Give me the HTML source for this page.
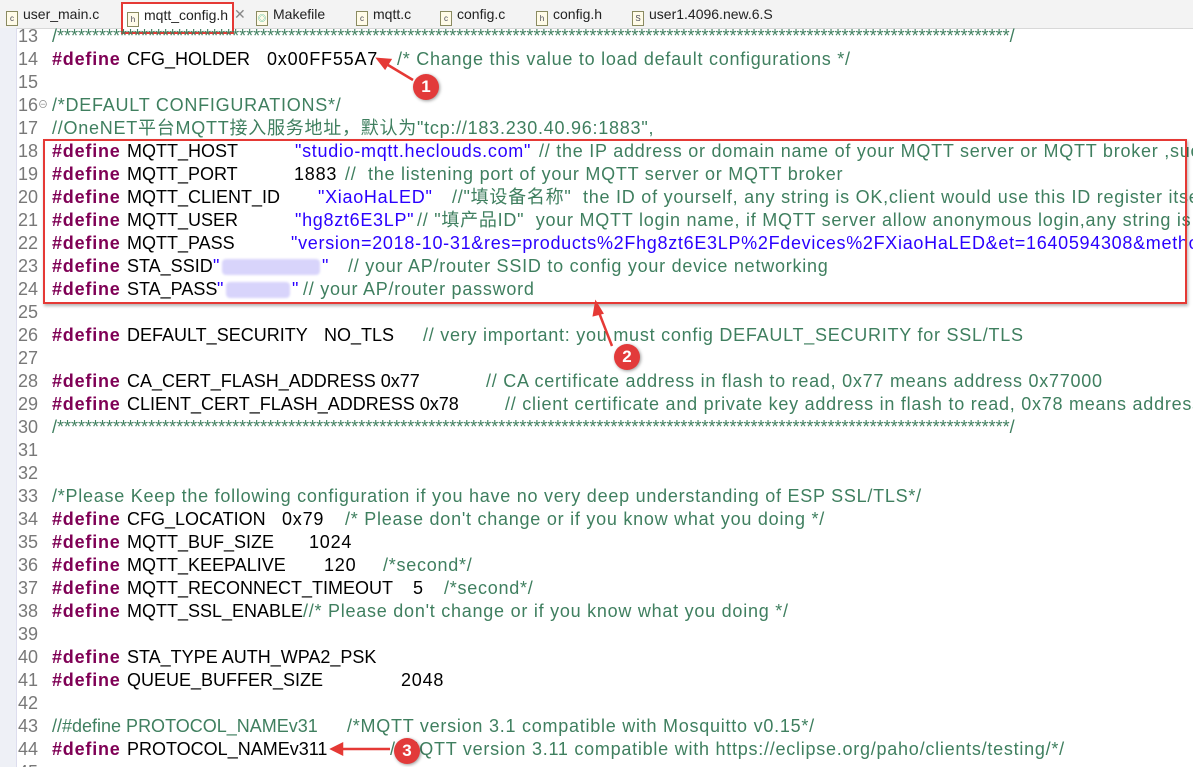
<!DOCTYPE html>
<html><head><meta charset="utf-8"><style>
body{margin:0;width:1193px;height:767px;overflow:hidden;background:#fff;font-family:"Liberation Sans","Noto Sans CJK SC",sans-serif;position:relative}
#tabs{position:absolute;left:0;top:0;width:1193px;height:28px;background:#f3f3f3;border-bottom:1px solid #d8d8d8}
.tab{position:absolute;top:6px;font-size:14px;color:#222;white-space:pre}
.ic{display:inline-block;width:10px;height:13px;border:1px solid #8a8a60;background:#fffbe8;font-size:8px;line-height:13px;text-align:center;margin-right:5px;vertical-align:-2px;color:#445}
#gut{position:absolute;left:0;top:28px;width:16px;height:739px;background:#eef0f6;border-right:1px solid #dde}
.l{position:absolute;left:0;height:23px;line-height:23px;font-size:18px;white-space:pre;width:1193px}
.l span{position:absolute;top:0}
.n{color:#787878}
.k{color:#7f0055;font-weight:bold;letter-spacing:0.8px}
.c{color:#3f7f5f;letter-spacing:0.75px}
.s{color:#2a00ff;letter-spacing:0.7px}
.d{color:#000}
.g{color:#000;letter-spacing:0.8px}
.blur{position:absolute;top:4px;height:16px;background:#d8d4fb;border-radius:4px;filter:blur(1px)}
.badge{position:absolute;width:26px;height:26px;border-radius:50%;background:#e23a3a;color:#fff;font-size:17px;font-weight:bold;text-align:center;line-height:26px;box-shadow:1px 1px 3px rgba(0,0,0,.4)}
</style></head><body>
<div id="tabs">
<span class="tab" style="left:6px"><span class="ic">c</span>user_main.c</span>
<span class="tab" style="left:234px;color:#888">✕</span>
<span class="tab" style="left:256px"><span class="ic" style="color:#2a8">◎</span>Makefile</span>
<span class="tab" style="left:356px"><span class="ic">c</span>mqtt.c</span>
<span class="tab" style="left:440px"><span class="ic">c</span>config.c</span>
<span class="tab" style="left:536px"><span class="ic">h</span>config.h</span>
<span class="tab" style="left:632px"><span class="ic">S</span>user1.4096.new.6.S</span>
</div>
<div style="position:absolute;left:121px;top:2px;width:109px;height:28px;border:2px solid #e53935;background:#fff"></div>
<span class="tab" style="left:127px;top:7px;position:absolute;font-size:14px"><span class="ic">h</span>mqtt_config.h</span>
<div id="gut"></div>
<div style="position:absolute;left:0;top:28px;width:1193px;height:739px;overflow:hidden">
<div style="position:absolute;left:0;top:-28px;width:1193px;height:767px">
<div class="l" style="top:25px"><span class="n" style="left:18px">13</span><span class="c" style="left:52px;letter-spacing:0">/****************************************************************************************************************************************/</span></div>
<div class="l" style="top:48px"><span class="n" style="left:18px">14</span><span class="k" style="left:52px">#define</span><span class="d" style="left:127px">CFG_HOLDER</span><span class="g" style="left:267px">0x00FF55A7</span><span class="c" style="left:397px">/* Change this value to load default configurations */</span></div>
<div class="l" style="top:71px"><span class="n" style="left:18px">15</span></div>
<div class="l" style="top:94px"><span class="n" style="left:18px">16</span><span style="left:38px;font-size:10px;color:#888">⊖</span><span class="c" style="left:52px">/*DEFAULT CONFIGURATIONS*/</span></div>
<div class="l" style="top:117px"><span class="n" style="left:18px">17</span><span class="c" style="left:52px">//OneNET平台MQTT接入服务地址，默认为"tcp://183.230.40.96:1883",</span></div>
<div class="l" style="top:140px"><span class="n" style="left:18px">18</span><span class="k" style="left:52px">#define</span><span class="d" style="left:127px">MQTT_HOST</span><span class="s" style="left:295px">"studio-mqtt.heclouds.com"</span><span class="c" style="left:539px">// the IP address or domain name of your MQTT server or MQTT broker ,such as</span></div>
<div class="l" style="top:163px"><span class="n" style="left:18px">19</span><span class="k" style="left:52px">#define</span><span class="d" style="left:127px">MQTT_PORT</span><span class="g" style="left:294px">1883</span><span class="c" style="left:345px">//  the listening port of your MQTT server or MQTT broker</span></div>
<div class="l" style="top:186px"><span class="n" style="left:18px">20</span><span class="k" style="left:52px">#define</span><span class="d" style="left:127px">MQTT_CLIENT_ID</span><span class="s" style="left:318px">"XiaoHaLED"</span><span class="c" style="left:452px">//"填设备名称"  the ID of yourself, any string is OK,client would use this ID register itself</span></div>
<div class="l" style="top:209px"><span class="n" style="left:18px">21</span><span class="k" style="left:52px">#define</span><span class="d" style="left:127px">MQTT_USER</span><span class="s" style="left:295px">"hg8zt6E3LP"</span><span class="c" style="left:417px">// "填产品ID"  your MQTT login name, if MQTT server allow anonymous login,any string is OK</span></div>
<div class="l" style="top:232px"><span class="n" style="left:18px">22</span><span class="k" style="left:52px">#define</span><span class="d" style="left:127px">MQTT_PASS</span><span class="s" style="left:291px">"version=2018-10-31&amp;res=products%2Fhg8zt6E3LP%2Fdevices%2FXiaoHaLED&amp;et=1640594308&amp;method=md5</span></div>
<div class="l" style="top:255px"><span class="n" style="left:18px">23</span><span class="k" style="left:52px">#define</span><span class="d" style="left:127px">STA_SSID</span><span class="s" style="left:213px">"</span><div class="blur" style="left:222px;width:98px"></div><span class="s" style="left:322px">"</span><span class="c" style="left:348px">// your AP/router SSID to config your device networking</span></div>
<div class="l" style="top:278px"><span class="n" style="left:18px">24</span><span class="k" style="left:52px">#define</span><span class="d" style="left:127px">STA_PASS</span><span class="s" style="left:217px">"</span><div class="blur" style="left:226px;width:64px"></div><span class="s" style="left:292px">"</span><span class="c" style="left:303px">// your AP/router password</span></div>
<div class="l" style="top:301px"><span class="n" style="left:18px">25</span></div>
<div class="l" style="top:324px"><span class="n" style="left:18px">26</span><span class="k" style="left:52px">#define</span><span class="d" style="left:127px">DEFAULT_SECURITY</span><span class="d" style="left:324px">NO_TLS</span><span class="c" style="left:423px">// very important: you must config DEFAULT_SECURITY for SSL/TLS</span></div>
<div class="l" style="top:347px"><span class="n" style="left:18px">27</span></div>
<div class="l" style="top:370px"><span class="n" style="left:18px">28</span><span class="k" style="left:52px">#define</span><span class="d" style="left:127px">CA_CERT_FLASH_ADDRESS 0x77</span><span class="c" style="left:486px">// CA certificate address in flash to read, 0x77 means address 0x77000</span></div>
<div class="l" style="top:393px"><span class="n" style="left:18px">29</span><span class="k" style="left:52px">#define</span><span class="d" style="left:127px">CLIENT_CERT_FLASH_ADDRESS 0x78</span><span class="c" style="left:505px">// client certificate and private key address in flash to read, 0x78 means address 0x78000</span></div>
<div class="l" style="top:416px"><span class="n" style="left:18px">30</span><span class="c" style="left:52px;letter-spacing:0">/****************************************************************************************************************************************/</span></div>
<div class="l" style="top:439px"><span class="n" style="left:18px">31</span></div>
<div class="l" style="top:462px"><span class="n" style="left:18px">32</span></div>
<div class="l" style="top:485px"><span class="n" style="left:18px">33</span><span class="c" style="left:52px">/*Please Keep the following configuration if you have no very deep understanding of ESP SSL/TLS*/</span></div>
<div class="l" style="top:508px"><span class="n" style="left:18px">34</span><span class="k" style="left:52px">#define</span><span class="d" style="left:127px">CFG_LOCATION</span><span class="g" style="left:282px">0x79</span><span class="c" style="left:345px">/* Please don't change or if you know what you doing */</span></div>
<div class="l" style="top:531px"><span class="n" style="left:18px">35</span><span class="k" style="left:52px">#define</span><span class="d" style="left:127px">MQTT_BUF_SIZE</span><span class="g" style="left:309px">1024</span></div>
<div class="l" style="top:554px"><span class="n" style="left:18px">36</span><span class="k" style="left:52px">#define</span><span class="d" style="left:127px">MQTT_KEEPALIVE</span><span class="g" style="left:324px">120</span><span class="c" style="left:383px">/*second*/</span></div>
<div class="l" style="top:577px"><span class="n" style="left:18px">37</span><span class="k" style="left:52px">#define</span><span class="d" style="left:127px">MQTT_RECONNECT_TIMEOUT</span><span class="d" style="left:413px">5</span><span class="c" style="left:444px">/*second*/</span></div>
<div class="l" style="top:600px"><span class="n" style="left:18px">38</span><span class="k" style="left:52px">#define</span><span class="d" style="left:127px">MQTT_SSL_ENABLE</span><span class="c" style="left:303px">//* Please don't change or if you know what you doing */</span></div>
<div class="l" style="top:623px"><span class="n" style="left:18px">39</span></div>
<div class="l" style="top:646px"><span class="n" style="left:18px">40</span><span class="k" style="left:52px">#define</span><span class="d" style="left:127px">STA_TYPE AUTH_WPA2_PSK</span></div>
<div class="l" style="top:669px"><span class="n" style="left:18px">41</span><span class="k" style="left:52px">#define</span><span class="d" style="left:127px">QUEUE_BUFFER_SIZE</span><span class="g" style="left:401px">2048</span></div>
<div class="l" style="top:692px"><span class="n" style="left:18px">42</span></div>
<div class="l" style="top:715px"><span class="n" style="left:18px">43</span><span class="c" style="left:52px;letter-spacing:0">//#define PROTOCOL_NAMEv31</span><span class="c" style="left:347px">/*MQTT version 3.1 compatible with Mosquitto v0.15*/</span></div>
<div class="l" style="top:738px"><span class="n" style="left:18px">44</span><span class="k" style="left:52px">#define</span><span class="d" style="left:127px">PROTOCOL_NAMEv311</span><span class="c" style="left:390px">/*MQTT version 3.11 compatible with https://eclipse.org/paho/clients/testing/*/</span></div>
<div class="l" style="top:761px"><span class="n" style="left:18px">45</span></div>
</div></div>
<div style="position:absolute;left:43px;top:139px;width:1140px;height:161px;border:2px solid #e53935;box-shadow:1px 2px 3px rgba(0,0,0,.3)"></div>
<svg style="position:absolute;left:0;top:0" width="1193" height="767">
<g stroke="#e53935" stroke-width="2.5" fill="#e53935">
<line x1="413" y1="80" x2="383" y2="62"/><polygon points="378,59 390,60 385,68"/>
<line x1="612" y1="346" x2="598" y2="310"/><polygon points="596,303 602,313 594,315"/>
<line x1="390" y1="749" x2="338" y2="749"/><polygon points="332,749 342,744 342,754"/>
</g></svg>
<div class="badge" style="left:413px;top:74px">1</div>
<div class="badge" style="left:614px;top:344px">2</div>
<div class="badge" style="left:394px;top:738px">3</div>
</body></html>
